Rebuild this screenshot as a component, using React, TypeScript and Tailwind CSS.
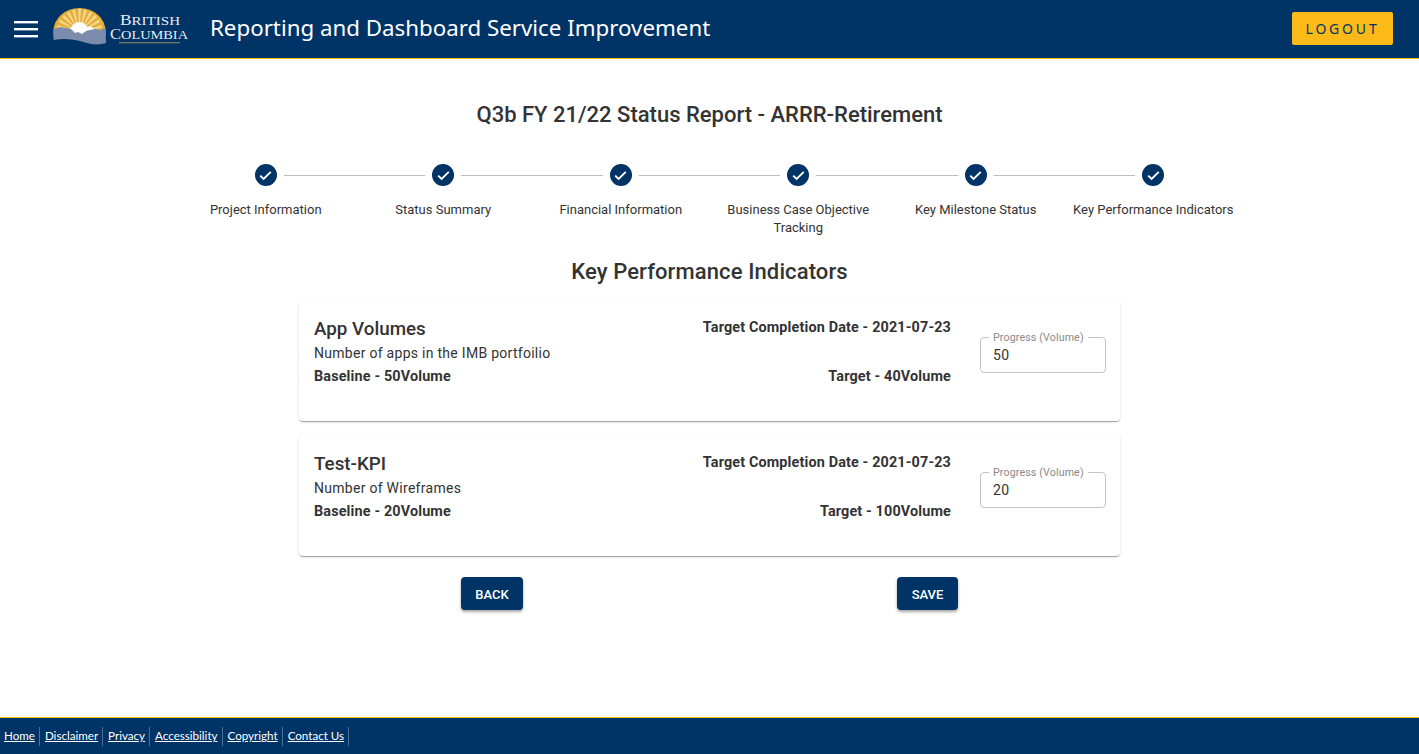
import React from "react";

const steps = [
  "Project Information",
  "Status Summary",
  "Financial Information",
  "Business Case Objective Tracking",
  "Key Milestone Status",
  "Key Performance Indicators",
];

const kpis = [
  { name: "App Volumes", desc: "Number of apps in the IMB portfoilio", baseline: "Baseline - 50Volume", target: "Target - 40Volume", value: "50" },
  { name: "Test-KPI", desc: "Number of Wireframes", baseline: "Baseline - 20Volume", target: "Target - 100Volume", value: "20" },
];

const links = ["Home", "Disclaimer", "Privacy", "Accessibility", "Copyright", "Contact Us"];

function Logo() {
  const rays = [];
  for (let a = -76; a <= 76; a += 15.2) {
    rays.push(<path key={a} d="M0 0 L-1.5 -23 L1.5 -23 Z" fill="#fbeab0" opacity="0.7" transform={`translate(26.5 24) rotate(${a})`} />);
  }
  return (
    <svg width="140" height="40" viewBox="0 0 140 40" className="block shrink-0">
      <path d="M0.5 23 A26 23 0 0 1 52.5 23 L52.5 28 L0.5 28 Z" fill="#e5ac37" />
      {rays}
      <circle cx="26.5" cy="23" r="9" fill="#ffffff" />
      <path d="M12 24 L19 19 L23 20 L28 16 L33 20 L38 18 L44 25 L36 28 L16 28 Z" fill="#ffffff" />
      <path d="M0.5 21 L7 19 L13 20 L18 21 L22 25 L25 24 L29 26 L33 23 L37 22 L42 21 L47 22 L52.5 20 L53 35 C47 37 40 37 32 34.5 C22 31 10 30 0.5 32 Z" fill="#7b8cac" />
      <text x="67" y="17" fontFamily="'Liberation Serif', serif" fontSize="15" fill="#e8ecf2" textLength="60" lengthAdjust="spacingAndGlyphs">
        B<tspan fontSize="13">RITISH</tspan>
      </text>
      <text x="57" y="31" fontFamily="'Liberation Serif', serif" fontSize="15" fill="#e8ecf2" textLength="78" lengthAdjust="spacingAndGlyphs">
        C<tspan fontSize="13">OLUMBIA</tspan>
      </text>
      <rect x="66" y="34" width="61" height="1.4" fill="#6d7563" />
    </svg>
  );
}

function Check() {
  return (
    <span className="flex h-[22px] w-[22px] items-center justify-center rounded-full bg-[#003366]">
      <svg width="13" height="11" viewBox="0 0 13 11" fill="none">
        <path d="M1.2 5.6 L4.6 9 L11.8 1.8" stroke="#ffffff" strokeWidth="1.9" />
      </svg>
    </span>
  );
}

function Stepper() {
  return (
    <div className="mx-auto mt-[34px] flex w-[1065px]">
      {steps.map((s, i) => (
        <div key={s} className="relative flex flex-1 flex-col items-center">
          {i > 0 && <span className="absolute left-[calc(-50%+18px)] right-[calc(50%+18px)] top-[11px] h-px bg-[#bdbdbd]" />}
          <Check />
          <div className="mt-[15px] w-full px-2 text-center text-[13px] leading-[18px] text-[#333]">{s}</div>
        </div>
      ))}
    </div>
  );
}

function Card({ k }: { k: (typeof kpis)[number] }) {
  return (
    <div className="flex h-[121px] rounded bg-white pl-[15px] pr-[14px] shadow-[0_2px_1px_-1px_rgba(0,0,0,0.2),0_1px_1px_0_rgba(0,0,0,0.14),0_1px_3px_0_rgba(0,0,0,0.12)]">
      <div className="flex-1 pt-[16px] text-[#333]">
        <div className="text-[18.8px] font-medium leading-[26px]">{k.name}</div>
        <div className="mt-px text-[14px] leading-[20px] tracking-[0.02em]">{k.desc}</div>
        <div className="mt-[4px] text-[14.4px] font-bold leading-[20px] tracking-[0.01em]">{k.baseline}</div>
      </div>
      <div className="flex w-[300px] flex-col items-end pt-[18px] text-[14.4px] font-bold leading-[20px] tracking-[0.01em] text-[#333]">
        <div>Target Completion Date - 2021-07-23</div>
        <div className="mt-[29px]">{k.target}</div>
      </div>
      <div className="relative ml-[29px] mt-[37px] h-[36px] w-[126px] rounded border border-[#c4c4c4] px-3 text-[14px] leading-[34px] tracking-[0.02em] text-[#333]">
        <span className="absolute left-[8px] top-[-6px] bg-white px-[4px] text-[10.7px] leading-[12px] tracking-[0.01em] text-[#8a8a8a]">Progress (Volume)</span>
        {k.value}
      </div>
    </div>
  );
}

export default function App() {
  return (
    <div className="flex h-[754px] flex-col overflow-hidden bg-white font-['Roboto',sans-serif]">
      <header className="flex h-[59px] shrink-0 items-center border-b border-[#fcba19] bg-[#003366] pl-[14px] pr-[26px]">
        <svg width="24" height="18" viewBox="0 0 24 18" className="shrink-0">
          <rect x="0" y="1" width="24" height="2.4" fill="#fff" />
          <rect x="0" y="8" width="24" height="2.4" fill="#fff" />
          <rect x="0" y="15" width="24" height="2.4" fill="#fff" />
        </svg>
        <div className="ml-[15px] mt-[-2px]"><Logo /></div>
        <div className="ml-[17px] mt-[-2px] font-['Noto_Sans',sans-serif] text-[22.3px] leading-[30px] text-white">Reporting and Dashboard Service Improvement</div>
        <button className="ml-auto mt-[-2px] h-[33px] w-[101px] rounded-[2px] bg-[#fcba19] font-['Noto_Sans',sans-serif] text-[14px] tracking-[0.2em] text-[#003366]">LOGOUT</button>
      </header>
      <main className="flex-1">
        <h1 className="mt-[41px] text-center text-[22px] font-medium leading-[30px] text-[#333]">Q3b FY 21/22 Status Report - ARRR-Retirement</h1>
        <Stepper />
        <h2 className="mt-[20px] text-center text-[22px] font-medium leading-[30px] tracking-[0.005em] text-[#333]">Key Performance Indicators</h2>
        <div className="mx-auto mt-[13px] flex w-[821px] flex-col gap-[14px]">
          {kpis.map((k) => <Card key={k.name} k={k} />)}
        </div>
        <div className="mx-auto mt-[21px] flex w-[821px] justify-between px-[162px]">
          <button className="h-[33px] w-[62px] rounded bg-[#003366] pt-[2px] text-[13px] font-medium text-white shadow-[0_2px_3px_rgba(0,0,0,0.35)]">BACK</button>
          <button className="h-[33px] w-[61px] rounded bg-[#003366] pt-[2px] text-[13px] font-medium text-white shadow-[0_2px_3px_rgba(0,0,0,0.35)]">SAVE</button>
        </div>
      </main>
      <footer className="flex h-[37px] shrink-0 items-center border-t border-[#fcba19] bg-[#003366] pl-[4px] font-['Lato',sans-serif] text-[11.6px] text-white">
        {links.map((l) => (
          <span key={l} className="mr-[5px] flex h-[19px] items-center border-r border-[#4d7094] pr-[4px] underline">{l}</span>
        ))}
      </footer>
    </div>
  );
}
